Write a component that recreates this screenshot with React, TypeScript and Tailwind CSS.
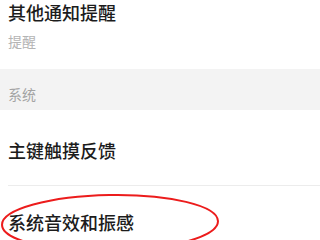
export default function App() {
  return (
    <div
      className="relative w-[320px] h-[240px] overflow-hidden bg-white"
      style={{ fontFamily: '"Noto Sans CJK SC", "Noto Sans", sans-serif' }}
    >
      <div className="h-[69px] px-2">
        <div className="text-[18px] leading-[24px] font-medium text-[#1c1c1c]">其他通知提醒</div>
        <div className="mt-[8px] text-[14px] leading-[18px] text-[#b4b4b4]">提醒</div>
      </div>

      <div className="h-[41px] bg-[#f3f3f3] px-2 pt-[16px]">
        <div className="text-[14px] leading-[18px] text-[#a3a3a3]">系统</div>
      </div>

      <div className="h-[75px] px-2 pt-[28px]">
        <div className="text-[18px] leading-[24px] font-medium text-[#1c1c1c]">主键触摸反馈</div>
      </div>
      <div className="ml-2 h-px bg-[#ececec]" />

      <div className="h-[54px] px-2 pt-[24px]">
        <div className="text-[18px] leading-[24px] font-medium text-[#1c1c1c]">系统音效和振感</div>
      </div>

      <svg className="absolute left-0 top-0 pointer-events-none" width="320" height="240" viewBox="0 0 320 240">
        <ellipse cx="110" cy="223" rx="108" ry="28" fill="none" stroke="#ec1c1c" strokeWidth="2" transform="rotate(-1 110 223)" />
      </svg>
    </div>
  );
}
